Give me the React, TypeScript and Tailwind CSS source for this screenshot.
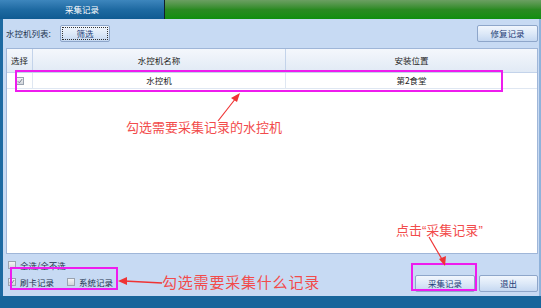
import React from "react";

const font = { fontFamily: '"Noto Sans CJK SC", "Noto Sans", sans-serif' };

function Box({ checked = false }: { checked?: boolean }) {
  return (
    <span className="w-[8px] h-[8px] border border-[#9aa3b0] bg-gradient-to-b from-[#f4f4f4] to-[#d2d6dc] flex items-center justify-center shrink-0">
      {checked && (
        <svg width="6" height="6" viewBox="0 0 6 6">
          <path d="M0.8 3.2 L2.4 4.8 L5.2 1" stroke="#7a8494" strokeWidth="1" fill="none" />
        </svg>
      )}
    </span>
  );
}

function Btn({ label, w, focus = false }: { label: string; w: string; focus?: boolean }) {
  return (
    <button
      className={`${w} h-[17px] rounded-[2px] border border-[#8ea6ca] bg-gradient-to-b from-[#f1f6fd] via-[#dde9f8] to-[#c5d8f1] text-[#1f3d77] text-[8.5px] leading-none flex items-center justify-center p-[1px]`}
    >
      <span className={`w-full h-full flex items-center justify-center ${focus ? "border border-dotted border-[#333]" : ""}`}>
        {label}
      </span>
    </button>
  );
}

export default function App() {
  return (
    <div className="relative w-[541px] h-[308px] flex flex-col bg-[#c7daf3] overflow-hidden" style={font}>
      {/* title strip */}
      <div className="h-[19px] flex shrink-0">
        <div className="w-[165px] bg-gradient-to-b from-[#3d86bd] via-[#1e6aa2] to-[#0f5b92] border-r border-[#10202a] flex items-center justify-center text-white text-[8.5px]">
          采集记录
        </div>
        <div className="flex-1 bg-gradient-to-b from-[#6b9f62] via-[#2a8a22] to-[#0e8f0e]" />
      </div>

      {/* body */}
      <div className="flex-1 flex flex-col border-l-[3px] border-r-[2px] border-l-[#1d6aa2] border-r-[#8fb2da] pl-[3px] pr-[1px]">
        <div className="flex items-start pt-[6px] mb-[3px] h-[26px]">
          <span className="text-[8.5px] text-[#1f3550] leading-[16px] w-[54px]">水控机列表:</span>
          <Btn label="筛选" w="w-[50px]" focus />
          <div className="flex-1" />
          <Btn label="修复记录" w="w-[61px]" />
        </div>

        {/* table */}
        <div className="h-[206px] border border-[#9fb6d8] bg-white flex flex-col">
          <div className="h-[24px] flex bg-gradient-to-b from-[#f4f7fc] to-[#e1eaf5] border-b border-[#c3d3ea] text-[8.5px] text-[#222]">
            <div className="w-[26px] border-r border-[#c3d3ea] flex items-center justify-center">选择</div>
            <div className="w-[253px] border-r border-[#c3d3ea] flex items-center justify-center">水控机名称</div>
            <div className="flex-1 flex items-center justify-center">安装位置</div>
          </div>
          <div className="h-[16px] flex border-b border-[#dfe7f2] text-[8.5px] text-[#222]">
            <div className="w-[26px] border-r border-[#dfe7f2] flex items-center justify-center">
              <Box checked />
            </div>
            <div className="w-[253px] border-r border-[#dfe7f2] flex items-center justify-center">水控机</div>
            <div className="flex-1 flex items-center justify-center">第2食堂</div>
          </div>
        </div>

        {/* bottom options */}
        <div className="flex-1 flex items-start">
          <div className="flex flex-col pt-[6px] pl-[2px] gap-[7px] text-[8.5px] text-[#1f3550]">
            <div className="flex items-center gap-[4px] h-[10px]">
              <Box />
              <span>全选/全不选</span>
            </div>
            <div className="flex items-center h-[10px]">
              <Box checked />
              <span className="ml-[4px] w-[47px]">刷卡记录</span>
              <Box />
              <span className="ml-[4px]">系统记录</span>
            </div>
          </div>
          <div className="flex-1" />
          <div className="flex gap-[4px] pt-[21px]">
            <Btn label="采集记录" w="w-[60px]" />
            <Btn label="退出" w="w-[59px]" />
          </div>
        </div>
      </div>

      <div className="h-[12px] bg-[#17659b] shrink-0" />

      {/* annotations */}
      <div className="absolute left-[15px] top-[70px] w-[488px] h-[22px] border-2 border-[#ee1cee]" />
      <div className="absolute left-[10px] top-[267px] w-[108px] h-[23px] border-2 border-[#ee1cee]" />
      <div className="absolute left-[411px] top-[263px] w-[66px] h-[28px] border-2 border-[#ee1cee]" />

      <svg className="absolute inset-0 pointer-events-none" width="541" height="308">
        <line x1="218" y1="121" x2="236" y2="98" stroke="#ef3434" strokeWidth="1.2" />
        <polygon points="240,93 231,98 237,102" fill="#ef3434" />
        <line x1="162" y1="283" x2="124" y2="281" stroke="#ef3434" strokeWidth="1.4" />
        <polygon points="118,281 127,277 127,285" fill="#ef3434" />
        <line x1="429" y1="237" x2="443" y2="261" stroke="#ef3434" strokeWidth="1.2" />
        <polygon points="445,266 439,259 446,256" fill="#ef3434" />
      </svg>

      <div className="absolute left-[126px] top-[119px] text-[13px] leading-[16px] text-[#f24b4b] whitespace-nowrap">
        勾选需要采集记录的水控机
      </div>
      <div className="absolute left-[162px] top-[273px] text-[15px] tracking-[0.8px] leading-[17px] text-[#f24b4b] whitespace-nowrap">
        勾选需要采集什么记录
      </div>
      <div className="absolute left-[396px] top-[222px] text-[13px] leading-[16px] text-[#f24b4b] whitespace-nowrap">
        点击<span style={{ fontFamily: '"Liberation Sans", sans-serif' }}>“</span>采集记录<span style={{ fontFamily: '"Liberation Sans", sans-serif' }}>”</span>
      </div>
    </div>
  );
}
